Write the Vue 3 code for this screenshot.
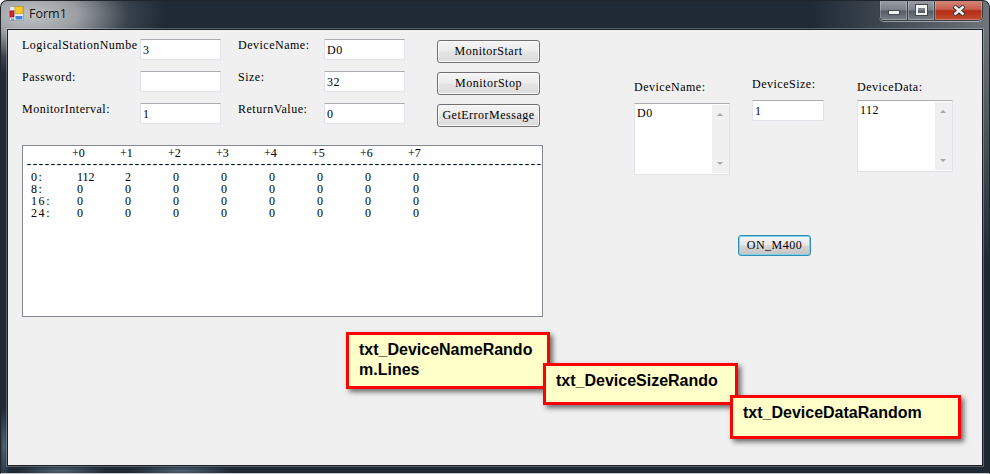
<script setup>
const columns = ['+0', '+1', '+2', '+3', '+4', '+5', '+6', '+7']
const rows = [
  { addr: '0:', values: [112, 2, 0, 0, 0, 0, 0, 0] },
  { addr: '8:', values: [0, 0, 0, 0, 0, 0, 0, 0] },
  { addr: '16:', values: [0, 0, 0, 0, 0, 0, 0, 0] },
  { addr: '24:', values: [0, 0, 0, 0, 0, 0, 0, 0] },
]
const rule = '-'.repeat(86)
const fields = [
  ['LogicalStationNumbe', '3', 'DeviceName:', 'D0'],
  ['Password:', '', 'Size:', '32'],
  ['MonitorInterval:', '1', 'ReturnValue:', '0'],
]
const buttons = ['MonitorStart', 'MonitorStop', 'GetErrorMessage']
</script>

<template>
  <div class="window">
    <div class="titlebar">
      <svg class="appicon" width="15" height="15" viewBox="0 0 15 15">
        <rect x="0.5" y="0.5" width="14" height="14" fill="#e6e8ea" stroke="#a4a8ae" />
        <path d="M0 4.5 H6 M0 9 H6" stroke="#b4b8be" />
        <rect x="1" y="5" width="4" height="6" fill="#d8262c" stroke="#7a1015" stroke-width="0.6" />
        <rect x="6" y="0.5" width="8" height="7" fill="#f5c92c" stroke="#b88a14" stroke-width="0.6" />
        <rect x="6.5" y="10" width="7" height="3.5" fill="#3f83dc" />
        <rect x="2" y="12.5" width="3" height="2" fill="#8a9098" />
      </svg>
      <span class="title">Form1</span>
      <div class="caption">
        <div class="cbtn min"><i></i></div>
        <div class="cbtn max"><i></i></div>
        <div class="cbtn close">
          <svg width="14" height="11" viewBox="0 0 14 11">
            <path d="M2 1 L12 10 M12 1 L2 10" stroke="#2b3138" stroke-width="4.4" />
            <path d="M2.5 1.5 L11.5 9.5 M11.5 1.5 L2.5 9.5" stroke="#f2f2f2" stroke-width="2.6" />
          </svg>
        </div>
      </div>
    </div>
    <div class="client">
      <section class="left">
        <div class="top">
          <div class="fields">
            <template v-for="f in fields" :key="f[0]">
              <label class="lbl">{{ f[0] }}</label>
              <div class="input">{{ f[1] }}</div>
              <label class="lbl">{{ f[2] }}</label>
              <div class="input">{{ f[3] }}</div>
            </template>
          </div>
          <div class="buttons">
            <button v-for="b in buttons" :key="b" class="btn">{{ b }}</button>
          </div>
        </div>
        <div class="listing">
          <div class="lrow head">
            <span></span>
            <span v-for="c in columns" :key="c">{{ c }}</span>
          </div>
          <div class="rule">{{ rule }}</div>
          <div v-for="r in rows" :key="r.addr" class="lrow data">
            <span class="addr">{{ r.addr }}</span>
            <span v-for="(v, i) in r.values" :key="i">{{ v }}</span>
          </div>
        </div>
      </section>
      <section class="right">
        <div class="cols">
          <div class="col name">
            <label class="lbl">DeviceName:</label>
            <div class="area">
              <span class="atext">D0</span>
              <div class="sb"><b class="up"></b><b class="down"></b></div>
            </div>
          </div>
          <div class="col size">
            <label class="lbl">DeviceSize:</label>
            <div class="input wide">1</div>
          </div>
          <div class="col data">
            <label class="lbl">DeviceData:</label>
            <div class="area">
              <span class="atext">112</span>
              <div class="sb"><b class="up"></b><b class="down"></b></div>
            </div>
          </div>
        </div>
        <button class="btn focus">ON_M400</button>
      </section>
    </div>
    <div class="note n1">txt_DeviceNameRando<br />m.Lines</div>
    <div class="note n2">txt_DeviceSizeRando</div>
    <div class="note n3">txt_DeviceDataRandom</div>
  </div>
</template>

<style scoped>
.window {
  position: relative;
  width: 990px;
  height: 474px;
  box-sizing: border-box;
  border-radius: 7px 7px 0 0;
  border: 1px solid #20262c;
  border-bottom-color: #c4c8cc;
  overflow: hidden;
  background:
    radial-gradient(ellipse 135px 60px at 30px 14px, #c0c3c6 0%, #9a9ea2 35%, rgba(70, 80, 90, 0.65) 72%, rgba(32, 42, 52, 0) 100%),
    radial-gradient(ellipse 45px 6px at 60px 470px, #4e6274 0%, rgba(78, 98, 116, 0) 100%),
    radial-gradient(ellipse 6px 40px at 3px 445px, #4e6274 0%, rgba(78, 98, 116, 0) 100%),
    radial-gradient(ellipse 50px 6px at 180px 470px, #4e6274 0%, rgba(78, 98, 116, 0) 100%),
    linear-gradient(180deg, rgba(31, 42, 53, 0) 0, rgba(31, 42, 53, 0) 30px, #1f2a35 260px),
    linear-gradient(90deg, #1f2a35 0%, #1f2a35 82%, #4a525a 92%, #6f757b 100%);
  display: flex;
  flex-direction: column;
  font-family: "Liberation Serif", "Times New Roman", serif;
  font-size: 12px;
  letter-spacing: 0.5px;
  color: #000;
}
.titlebar {
  position: relative;
  height: 27px;
  flex: none;
  display: flex;
  align-items: center;
  padding-left: 8px;
  padding-bottom: 2px;
  box-sizing: border-box;
}
.appicon { flex: none; }
.title {
  margin-left: 5px;
  font-family: "Open Sans", "Liberation Sans", sans-serif;
  font-size: 12.5px;
  letter-spacing: 0;
  color: #101418;
}
.caption {
  position: absolute;
  top: -1px;
  right: 6px;
  display: flex;
  height: 20px;
  border: 1px solid #3a4248;
  border-top: 0;
  border-radius: 0 0 5px 5px;
  overflow: hidden;
  box-shadow: 0 1px 0 rgba(255, 255, 255, 0.45);
}
.cbtn {
  height: 20px;
  display: flex;
  align-items: center;
  justify-content: center;
  border-right: 1px solid #3a4248;
  box-shadow: inset 0 0 0 1px rgba(255, 255, 255, 0.25);
  background: linear-gradient(#9aa0a6 0%, #7b8188 50%, #555b62 55%, #7a8087 100%);
}
.min { width: 27px; }
.max { width: 26px; }
.min i {
  display: block;
  width: 10px;
  height: 3px;
  margin-top: 5px;
  background: #f2f2f2;
  box-shadow: 0 0 0 1px #444a50;
}
.max i {
  display: block;
  width: 7px;
  height: 5px;
  border: 2px solid #f2f2f2;
  border-top-width: 3px;
  outline: 1px solid #444a50;
}
.close {
  width: 47px;
  border-right: 0;
  background: linear-gradient(#d58a7d 0%, #c8604f 45%, #b62c14 55%, #c24e30 100%);
}
.client {
  flex: 1;
  margin: 1px 6px 7px 6px;
  box-sizing: border-box;
  border: 1px solid #1a2028;
  background: #f0f0f0;
  display: flex;
  min-height: 0;
  box-shadow: 0 0 0 1px rgba(255, 255, 255, 0.25);
}
.left {
  width: 536px;
  flex: none;
  box-sizing: border-box;
  padding: 9px 0 0 14px;
}
.top {
  display: flex;
  height: 106px;
}
.fields {
  display: grid;
  grid-template-columns: 118px 81px 103px 81px;
  grid-auto-rows: 21px;
  row-gap: 11px;
}
.fields .lbl:nth-child(4n + 3) { padding-left: 17px; }
.lbl {
  display: block;
  white-space: nowrap;
  line-height: 12px;
}
.input {
  box-sizing: border-box;
  height: 21px;
  width: 81px;
  background: #fff;
  border: 1px solid #e2e3ea;
  border-top-color: #abadb3;
  padding: 3px 0 0 2px;
  line-height: 14px;
}
.input.wide { width: 72px; }
.buttons {
  display: flex;
  flex-direction: column;
  gap: 9px;
  margin-left: 32px;
  padding-top: 1px;
}
.btn {
  box-sizing: border-box;
  display: block;
  width: 103px;
  height: 23px;
  padding: 0;
  border: 1px solid #707070;
  border-radius: 3px;
  background: linear-gradient(#f4f4f4 0%, #ececec 48%, #e4e4e4 52%, #dcdcdc 100%);
  box-shadow: inset 0 0 0 1px #f8f8f8;
  font: inherit;
  letter-spacing: inherit;
  color: #000;
}
.listing {
  box-sizing: border-box;
  width: 521px;
  height: 172px;
  background: #fff;
  border: 1px solid #828790;
  padding: 1px 0 0 3px;
  line-height: 12px;
  letter-spacing: 0;
  overflow: hidden;
  will-change: opacity;
}
.lrow {
  display: grid;
  grid-template-columns: 46px repeat(8, 48px);
  height: 12px;
  white-space: nowrap;
}
.lrow.data span { padding-left: 5px; }
.lrow.data .addr { padding-left: 5px; letter-spacing: 1.6px; }
.rule {
  font-family: "Liberation Mono", monospace;
  font-size: 13px;
  letter-spacing: -1.8px;
  margin-left: -1px;
  height: 12px;
  white-space: nowrap;
}
.right {
  flex: 1;
  position: relative;
  padding-left: 90px;
}
.cols { display: flex; }
.col { display: flex; flex-direction: column; }
.col.name { width: 118px; padding-top: 51px; }
.col.size { width: 105px; padding-top: 48px; }
.col.data { padding-top: 51px; }
.col.name .lbl { height: 22px; }
.col.size .lbl { height: 22px; }
.col.data .lbl { height: 19px; }
.area {
  box-sizing: border-box;
  width: 96px;
  height: 72px;
  background: #fff;
  border: 1px solid #e2e3ea;
  border-top-color: #abadb3;
  display: flex;
  justify-content: space-between;
}
.atext { padding: 2px 0 0 2px; line-height: 14px; }
.sb {
  width: 17px;
  margin: 1px 0;
  background: #f0f0f0;
  position: relative;
}
.sb b {
  position: absolute;
  left: 5px;
  width: 0;
  height: 0;
  border-left: 3.5px solid transparent;
  border-right: 3.5px solid transparent;
}
.sb .up { top: 8px; border-bottom: 3px solid #a6a6a6; }
.sb .down { bottom: 8px; border-top: 3px solid #a6a6a6; }
.btn.focus {
  width: 73px;
  height: 21px;
  margin: 60px 0 0 104px;
  border-color: #2c8fb8;
  background: linear-gradient(#f6f6f6 0%, #e8e8e8 45%, #d4d4d4 55%, #c4c4c4 100%);
  box-shadow: inset 0 0 0 1px #7fd0ea;
}
.note {
  position: absolute;
  box-sizing: border-box;
  background: #ffffc9;
  border: 3px solid #f00;
  box-shadow: 3px 3px 5px rgba(0, 0, 0, 0.55);
  font-family: "Liberation Sans", Arial, sans-serif;
  font-size: 16px;
  font-weight: 700;
  letter-spacing: 0;
  line-height: 20px;
  color: #000;
  padding: 5px 10px;
}
.n1 { left: 345px; top: 331px; width: 204px; height: 57px; }
.n2 { left: 542px; top: 362px; width: 195px; height: 42px; }
.n3 { left: 729px; top: 394px; width: 231px; height: 44px; }
</style>
